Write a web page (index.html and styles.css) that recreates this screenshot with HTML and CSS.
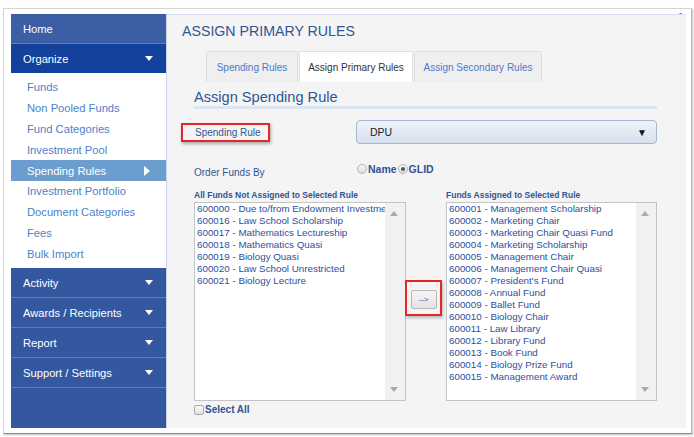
FILE: index.html
```html
<!DOCTYPE html>
<html>
<head>
<meta charset="utf-8">
<link rel="stylesheet" href="styles.css">
</head>
<body>
<div class="frame">
  <div class="app">
    <nav class="sidebar">
      <div class="nav-head">Home</div>
      <div class="nav-head open">Organize <span class="caret"></span></div>
      <ul class="sub">
        <li>Funds</li>
        <li>Non Pooled Funds</li>
        <li>Fund Categories</li>
        <li>Investment Pool</li>
        <li class="current">Spending Rules <span class="rcaret"></span></li>
        <li>Investment Portfolio</li>
        <li>Document Categories</li>
        <li>Fees</li>
        <li>Bulk Import</li>
      </ul>
      <div class="nav-head">Activity <span class="caret"></span></div>
      <div class="nav-head">Awards / Recipients <span class="caret"></span></div>
      <div class="nav-head">Report <span class="caret"></span></div>
      <div class="nav-head">Support / Settings <span class="caret"></span></div>
    </nav>
    <main class="main">
      <span class="dash">-</span>
      <h1 class="page-title">ASSIGN PRIMARY RULES</h1>
      <div class="tabs">
        <div class="tab">Spending Rules</div>
        <div class="tab active">Assign Primary Rules</div>
        <div class="tab">Assign Secondary Rules</div>
      </div>
      <section class="panel">
        <h2 class="panel-title">Assign Spending Rule</h2>
        <div class="row rule-row">
          <div class="label-cell"><span class="label boxed">Spending Rule</span></div>
          <div class="select"><span>DPU</span><span class="sel-arrow">&#9660;</span></div>
        </div>
        <div class="row order-row">
          <div class="label-cell"><span class="label">Order Funds By</span></div>
          <div class="radios">
            <span class="radio"></span><span class="radio-text">Name</span>
            <span class="radio checked"></span><span class="radio-text">GLID</span>
          </div>
        </div>
        <div class="lists">
          <div class="col">
            <div class="list-title">All Funds Not Assigned to Selected Rule</div>
            <div class="listbox">
              <ul class="items">
                <li>600000 - Due to/from Endowment Investment</li>
                <li>600016 - Law School Scholarship</li>
                <li>600017 - Mathematics Lectureship</li>
                <li>600018 - Mathematics Quasi</li>
                <li>600019 - Biology Quasi</li>
                <li>600020 - Law School Unrestricted</li>
                <li>600021 - Biology Lecture</li>
              </ul>
              <div class="scroll"><span class="up"></span><span class="down"></span></div>
            </div>
            <div class="select-all"><span class="check"></span>Select All</div>
          </div>
          <div class="mid">
            <div class="redbox"><button class="move">--&gt;</button></div>
          </div>
          <div class="col">
            <div class="list-title">Funds Assigned to Selected Rule</div>
            <div class="listbox">
              <ul class="items">
                <li>600001 - Management Scholarship</li>
                <li>600002 - Marketing Chair</li>
                <li>600003 - Marketing Chair Quasi Fund</li>
                <li>600004 - Marketing Scholarship</li>
                <li>600005 - Management Chair</li>
                <li>600006 - Management Chair Quasi</li>
                <li>600007 - President's Fund</li>
                <li>600008 - Annual Fund</li>
                <li>600009 - Ballet Fund</li>
                <li>600010 - Biology Chair</li>
                <li>600011 - Law Library</li>
                <li>600012 - Library Fund</li>
                <li>600013 - Book Fund</li>
                <li>600014 - Biology Prize Fund</li>
                <li>600015 - Management Award</li>
              </ul>
              <div class="scroll"><span class="up"></span><span class="down"></span></div>
            </div>
          </div>
        </div>
      </section>
    </main>
  </div>
</div>
</body>
</html>
```

FILE: styles.css
```css
* { box-sizing: border-box; }
html, body { margin: 0; padding: 0; background: #fff; }
body { font-family: "Liberation Sans", Arial, sans-serif; width: 694px; height: 437px; overflow: hidden; }

.frame {
  margin: 8px 0 0 3px;
  width: 689px;
  height: 426px;
  padding: 5px 5px 5px 7px;
  border: 1px solid #d4d4d4;
  border-right-color: #b8b8b8;
  border-bottom-color: #8a8a8a;
  box-shadow: 1px 1px 2px rgba(0,0,0,0.25);
  background: #fff;
}
.app { display: flex; width: 675px; height: 414px; }

/* sidebar */
.sidebar { width: 155px; flex: none; background: #34589f; display: flex; flex-direction: column; }
.nav-head {
  height: 30px; display: flex; align-items: center; justify-content: space-between;
  padding: 0 13px 0 12px; color: #fff; font-size: 11.2px;
  background: #34589f; border-bottom: 1px solid #5c7dbd;
}
.nav-head:first-child { background: #3b5ea5; height: 30px; }
.nav-head.open { background: #13419b; height: 29px; border-bottom: none; }
.caret { width: 0; height: 0; border-left: 4px solid transparent; border-right: 4px solid transparent; border-top: 5px solid #fff; }
.sub { list-style: none; margin: 0; padding: 4px 0 0; height: 195px; background: #fff; }
.sub li { height: 20.8px; padding-left: 16px; font-size: 11.2px; color: #4f82c6; display: flex; align-items: center; justify-content: space-between; padding-right: 16px; }
.sub li.current { background: #6b9dcf; color: #fff; }
.rcaret { width: 0; height: 0; border-top: 5px solid transparent; border-bottom: 5px solid transparent; border-left: 6px solid #fff; }

/* main */
.main { flex: 1; background: #f4f4f4; border-top: 1px solid #d3dbee; border-left: 1px solid #c8d2e6; position: relative; padding: 0 0 0 15px; }
.dash { position: absolute; right: 4px; top: -7px; font-size: 9px; color: #555; }
.page-title { margin: 0; padding-top: 7px; height: 36px; font-size: 14.2px; font-weight: normal; color: #2f5597; line-height: 18px; }
.tabs { display: flex; margin-left: 24px; height: 31px; gap: 1px; }
.tab { height: 31px; display: flex; align-items: center; justify-content: center; font-size: 10px; color: #4a7bc8; background: #efefef; border: 1px solid #dedede; border-bottom: none; border-radius: 2px 2px 0 0; }
.tab:nth-child(1) { width: 92px; }
.tab:nth-child(2) { width: 114px; }
.tab:nth-child(3) { width: 128px; }
.tab.active { background: #fff; color: #333; }

.panel { margin-left: 12px; width: 463px; }
.panel-title { margin: 0; font-size: 14.6px; font-weight: normal; color: #2f5597; line-height: 18px; padding-top: 6px; height: 27px; border-bottom: 3px solid #dbe4f2; }

.row { display: flex; align-items: center; }
.label-cell { width: 162px; flex: none; }
.label { font-size: 10px; color: #2f5597; }
.rule-row { margin-top: 11px; height: 24px; }
.boxed { display: inline-block; margin-left: -13px; padding: 2px 7px 2px 12px; border: 2px solid #e3262a; box-shadow: 1px 2px 3px rgba(0,0,0,0.3); }
.select {
  flex: 1; height: 24px; display: flex; align-items: center; justify-content: space-between;
  padding: 0 9px 0 13px; font-size: 10.5px; color: #222;
  background: linear-gradient(#eef2f9, #d8e1ef);
  border: 1px solid #a8b7d0; border-radius: 4px;
}
.sel-arrow { font-size: 10px; color: #111; }

.order-row { margin-top: 15px; height: 20px; }
.order-row .label { position: relative; top: 2px; }
.radios { display: flex; align-items: center; margin-left: 1px; }
.radio { width: 10px; height: 10px; border-radius: 50%; border: 1px solid #b5b5b5; background: linear-gradient(#f8f8f8, #dcdcdc); position: relative; margin-right: 1px; }
.radio.checked::after { content: ""; position: absolute; left: 2px; top: 2px; width: 4px; height: 4px; border-radius: 50%; background: #555; }
.radio-text { font-size: 10.5px; font-weight: bold; color: #2f5597; margin-right: 1px; }

.lists { display: flex; margin-top: 10px; }
.col { width: 212px; flex: none; }
.list-title { font-size: 8.5px; font-weight: bold; color: #2f5597; height: 13px; line-height: 13px; }
.listbox { height: 199px; border: 1px solid #c4c4c4; background: #fff; display: flex; }
.items { flex: 1; list-style: none; margin: 0; padding: 0 0 0 2px; overflow: hidden; }
.items li { font-size: 9.8px; line-height: 12px; height: 12px; color: #2c4f9e; white-space: nowrap; overflow: hidden; }
.scroll { width: 20px; flex: none; background: #f1f1f1; position: relative; }
.up, .down { position: absolute; left: 5px; width: 0; height: 0; border-left: 4px solid transparent; border-right: 4px solid transparent; }
.up { top: 8px; border-bottom: 5px solid #a9a9a9; }
.down { bottom: 8px; border-top: 5px solid #a9a9a9; }
.select-all { display: flex; align-items: center; font-size: 10px; font-weight: bold; color: #2f5597; margin-top: 2px; height: 13px; }
.check { width: 10px; height: 10px; border: 1px solid #aaa; border-radius: 2px; background: linear-gradient(#fafafa, #e0e0e0); margin-right: 1px; }

.mid { width: 40px; flex: none; display: flex; align-items: flex-start; justify-content: flex-start; padding-top: 91px; margin-left: -1px; margin-right: 1px; }
.redbox { width: 37px; height: 36px; border: 2px solid #e3262a; display: flex; align-items: center; justify-content: center; box-shadow: 1px 2px 3px rgba(0,0,0,0.25); }
.move { width: 26px; height: 19px; padding: 0; font-family: "Liberation Sans", Arial, sans-serif; font-size: 8px; color: #2f5597; background: linear-gradient(#f6f6f6, #e3e3e3); border: 1px solid #b8b8b8; border-radius: 2px; margin-top: 2px; }
.col:last-child { width: 211px; }
```
